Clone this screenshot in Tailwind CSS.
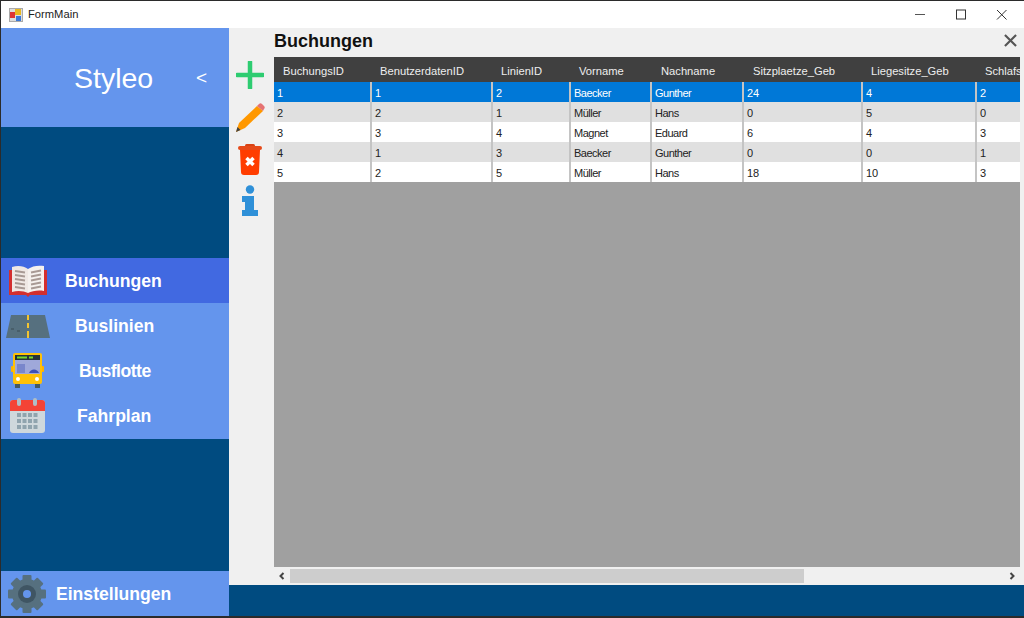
<!DOCTYPE html>
<html><head><meta charset="utf-8"><script src="https://cdn.jsdelivr.net/npm/@tailwindcss/browser@4"></script></head>
<body class="m-0 overflow-hidden">
<div class="w-[1024px] h-[618px] flex flex-col bg-white border-t border-l border-b-2 border-[#2b2b2b] font-['Liberation_Sans',sans-serif] overflow-hidden">
  <!-- title bar -->
  <div class="h-[27px] flex items-center bg-white shrink-0">
    <svg class="ml-[8px] w-[14px] h-[14px]" viewBox="0 0 14 14"><rect x="0.5" y="0.5" width="13" height="13" fill="#ddd" stroke="#aaa"/><rect x="1" y="4" width="5" height="6" fill="#d33"/><rect x="6" y="1" width="6" height="6" fill="#e8b820"/><rect x="7" y="8" width="5" height="5" fill="#3a78d8"/></svg>
    <span class="ml-[5px] text-[11.2px] text-[#222]">FormMain</span>
    <div class="ml-auto flex items-center text-[#333]">
      <svg class="w-[46px] h-[27px]" viewBox="0 0 46 27"><path d="M17 13.500h10" stroke="#555" stroke-width="1"/></svg>
      <svg class="w-[46px] h-[27px] -ml-[5px]" viewBox="0 0 46 27"><rect x="17.500" y="9" width="9" height="9" fill="none" stroke="#333"/></svg>
      <svg class="w-[46px] h-[27px] -ml-[5px] mr-[-2px]" viewBox="0 0 46 27"><path d="M17 9l9.500 9.500M26.500 9L17 18.500" stroke="#333" fill="none"/></svg>
    </div>
  </div>
  <div class="flex-1 flex min-h-0">
    <!-- sidebar -->
    <div class="w-[228px] shrink-0 flex flex-col bg-[#004b80]">
      <div class="h-[99px] bg-[#6495ed] flex items-center text-white shrink-0">
        <span class="ml-[73px] w-[122px] text-[28.500px] mt-[1px] leading-none">Styleo</span>
        <span class="text-[19px] leading-none">&lt;</span>
      </div>
      <div class="h-[131px] shrink-0"></div>
      <div class="h-[45px] bg-[#4169e1] flex items-center shrink-0 text-white font-bold text-[17.600px]">
        <svg class="ml-[7px] w-[40px] h-[32px] shrink-0" viewBox="0 0 40 32"><path d="M1 5h38v25H22l-2 2-2-2H1z" fill="#d32f2f"/><path d="M4 2c6-2 12-1 16 2v24c-4-2-10-3-16-1z" fill="#efe8e4"/><path d="M36 1c-6-1-12 0-16 3v24c4-2 10-3 16-2z" fill="#f5f1ee"/><path d="M7 6l10 1.500M7 10l10 1.500M7 14l10 1.500M7 18l10 1.500M7 22l10 1.500M23 7.500l10-2M23 11.500l10-2M23 15.500l10-2M23 19.500l10-2M23 23.500l10-2" stroke="#a89a94" stroke-width="2"/></svg>
        <span class="ml-[17px] mt-[2px]">Buchungen</span>
      </div>
      <div class="h-[45px] bg-[#6495ed] flex items-center shrink-0 text-white font-bold text-[17.600px]">
        <svg class="ml-[5px] w-[44px] h-[24px] shrink-0 mt-[1px]" viewBox="0 0 44 24"><path d="M5 1h34l5 23H0z" fill="#56707f"/><path d="M22 1v5M22 9v5M22 17v7" stroke="#f4c430" stroke-width="2"/><path d="M5 15h3M11 17h3" stroke="#3a4c57" stroke-width="1"/></svg>
        <span class="ml-[25px] mt-[2px]">Buslinien</span>
      </div>
      <div class="h-[45px] bg-[#6495ed] flex items-center shrink-0 text-white font-bold text-[17.600px]">
        <svg class="ml-[10px] w-[33px] h-[36px] shrink-0 mt-[1px]" viewBox="0 0 33 36"><rect x="4" y="31" width="5" height="4" fill="#455a64"/><rect x="24" y="31" width="5" height="4" fill="#455a64"/><rect x="0" y="13" width="3" height="6" rx="1" fill="#ffb300"/><rect x="30" y="13" width="3" height="6" rx="1" fill="#ffb300"/><rect x="2" y="0" width="29" height="31" rx="2" fill="#ffc107"/><rect x="4" y="2" width="25" height="5" fill="#263238"/><path d="M6 4.500h10M18 4.500h4" stroke="#76d82a" stroke-width="2"/><rect x="4" y="7" width="25" height="14" fill="#9fa8da"/><rect x="6" y="11" width="8" height="9" fill="#7986cb"/><path d="M18 20a5.500 6 0 0 1 10 0z" fill="#3f51b5"/><circle cx="7" cy="26" r="2" fill="#fff"/><circle cx="26" cy="26" r="2" fill="#fff"/></svg>
        <span class="ml-[35px] mt-[2px] tracking-[-0.5px]">Busflotte</span>
      </div>
      <div class="h-[46px] bg-[#6495ed] flex items-center shrink-0 text-white font-bold text-[17.600px]">
        <svg class="ml-[9px] w-[35px] h-[35px] shrink-0 mb-[2px]" viewBox="0 0 35 35"><rect y="2" width="35" height="33" rx="3" fill="#cfd8dc"/><path d="M0 13V5a3 3 0 0 1 3-3h29a3 3 0 0 1 3 3v8z" fill="#f44336"/><rect x="7" y="0" width="4" height="8" rx="2" fill="#b0bec5"/><rect x="23" y="0" width="4" height="8" rx="2" fill="#b0bec5"/><g fill="#90a4ae"><rect x="7" y="15" width="4" height="4"/><rect x="12.500" y="15" width="4" height="4"/><rect x="18" y="15" width="4" height="4"/><rect x="23.500" y="15" width="4" height="4"/><rect x="7" y="21" width="4" height="4"/><rect x="12.500" y="21" width="4" height="4"/><rect x="18" y="21" width="4" height="4"/><rect x="23.500" y="21" width="4" height="4"/><rect x="7" y="27" width="4" height="4"/><rect x="12.500" y="27" width="4" height="4"/><rect x="18" y="27" width="4" height="4"/><rect x="23.500" y="27" width="4" height="4"/></g></svg>
        <span class="ml-[32px] mt-[1px]">Fahrplan</span>
      </div>
      <div class="flex-1"></div>
      <div class="h-[45px] bg-[#6495ed] flex items-center shrink-0 text-white font-bold text-[17.600px]">
        <svg class="ml-[7px] w-[38px] h-[40px] shrink-0" viewBox="0 0 38 40"><g fill="#56707f"><circle cx="19" cy="20" r="15"/><rect x="14.500" y="1" width="9" height="38" rx="1"/><rect x="14.500" y="1" width="9" height="38" rx="1" transform="rotate(45 19 20)"/><rect x="14.500" y="1" width="9" height="38" rx="1" transform="rotate(90 19 20)"/><rect x="14.500" y="1" width="9" height="38" rx="1" transform="rotate(135 19 20)"/></g><circle cx="19" cy="20" r="9" fill="#3f5563"/><circle cx="19" cy="20" r="4" fill="#6495ed"/></svg>
        <span class="ml-[10px] mt-[2px]">Einstellungen</span>
      </div>
    </div>
    <!-- right -->
    <div class="flex-1 flex flex-col min-w-0">
      <div class="flex-1 bg-[#f0f0f0] flex min-h-0">
        <div class="w-[45px] shrink-0 flex flex-col items-center pt-[33px] pr-[3px]">
          <svg class="w-[28px] h-[28px]" viewBox="0 0 28 28"><path d="M14 1v26M1 14h26" stroke="#2ecc71" stroke-width="4.500" stroke-linecap="round"/></svg>
          <svg class="w-[30px] h-[30px] mt-[14px]" viewBox="0 0 30 30"><path d="M1 29l3-9L22 3l6 5-18 17z" fill="#ff9800"/><path d="M22 3l2-2c1-1 2-1 3 0l2 2c1 1 1 2 0 3l-1 2z" fill="#e57373"/><path d="M1 29l1.500-5 3 3z" fill="#424242"/></svg>
          <svg class="w-[24px] h-[31px] mt-[11px]" viewBox="0 0 24 31"><rect x="7" y="0" width="10" height="4" rx="1.500" fill="#d84315"/><rect x="0" y="2" width="24" height="4" rx="2" fill="#e64a19"/><path d="M2 6h20l-1 22a3 3 0 0 1-3 3H6a3 3 0 0 1-3-3z" fill="#ff3d00"/><path d="M8.500 14l7 7M15.500 14l-7 7" stroke="#fff" stroke-width="3.500"/></svg>
          <svg class="w-[18px] h-[31px] mt-[10px]" viewBox="0 0 18 31"><circle cx="9" cy="4.500" r="4.200" fill="#2f90d8"/><path d="M1 11h12v14h4v6H1v-6h3v-8H1z" fill="#2f90d8"/></svg>
        </div>
        <div class="flex-1 flex flex-col min-w-0 relative">
          <div class="h-[29px] shrink-0 flex items-center">
            <span class="font-bold text-[18px] text-[#111] mt-[-3px]">Buchungen</span>
            <svg class="absolute right-[7px] top-[6px] w-[13px] h-[13px]" viewBox="0 0 14 14"><path d="M1 1l12 12M13 1L1 13" stroke="#555" stroke-width="2.300"/></svg>
          </div>
          <div class="flex-1 w-[746px] bg-[#a0a0a0] overflow-hidden min-h-0">
            <div class="w-[790px] text-[11px]">
              <div class="h-[25px] bg-[#404040] text-[#eee] grid grid-cols-[98px_121px_78px_81px_92px_119px_114px_87px] items-center text-left [&>span]:pl-[8px] [&>span]:pt-[3px] text-[11.200px]">
                <span class="ml-[1px]">BuchungsID</span><span>BenutzerdatenID</span><span>LinienID</span><span>Vorname</span><span class="ml-[1px]">Nachname</span><span class="ml-[1px]">Sitzplaetze_Geb</span><span>Liegesitze_Geb</span><span>Schlafsitze_Geb</span>
              </div>
              <div class="h-[20px] bg-[#0078d7] text-white grid grid-cols-[98px_121px_78px_81px_92px_119px_114px_87px] items-start [&>span]:h-[20px] [&>span]:border-r-2 [&>span]:border-[#c4c4c4] [&>span]:pl-[3px] [&>span]:pt-[1px] [&>span]:leading-[20px]">
                <span>1</span><span>1</span><span>2</span><span class="tracking-[-0.5px]">Baecker</span><span class="tracking-[-0.5px]">Gunther</span><span>24</span><span>4</span><span>2</span>
              </div>
              <div class="h-[20px] bg-[#e0e0e0] text-[#222] grid grid-cols-[98px_121px_78px_81px_92px_119px_114px_87px] items-start [&>span]:h-[20px] [&>span]:border-r-2 [&>span]:border-[#c4c4c4] [&>span]:pl-[3px] [&>span]:pt-[1px] [&>span]:leading-[20px]">
                <span>2</span><span>2</span><span>1</span><span class="tracking-[-0.5px]">Müller</span><span class="tracking-[-0.5px]">Hans</span><span>0</span><span>5</span><span>0</span>
              </div>
              <div class="h-[20px] bg-white text-[#222] grid grid-cols-[98px_121px_78px_81px_92px_119px_114px_87px] items-start [&>span]:h-[20px] [&>span]:border-r-2 [&>span]:border-[#c4c4c4] [&>span]:pl-[3px] [&>span]:pt-[1px] [&>span]:leading-[20px]">
                <span>3</span><span>3</span><span>4</span><span class="tracking-[-0.5px]">Magnet</span><span class="tracking-[-0.5px]">Eduard</span><span>6</span><span>4</span><span>3</span>
              </div>
              <div class="h-[20px] bg-[#e0e0e0] text-[#222] grid grid-cols-[98px_121px_78px_81px_92px_119px_114px_87px] items-start [&>span]:h-[20px] [&>span]:border-r-2 [&>span]:border-[#c4c4c4] [&>span]:pl-[3px] [&>span]:pt-[1px] [&>span]:leading-[20px]">
                <span>4</span><span>1</span><span>3</span><span class="tracking-[-0.5px]">Baecker</span><span class="tracking-[-0.5px]">Gunther</span><span>0</span><span>0</span><span>1</span>
              </div>
              <div class="h-[20px] bg-white text-[#222] grid grid-cols-[98px_121px_78px_81px_92px_119px_114px_87px] items-start [&>span]:h-[20px] [&>span]:border-r-2 [&>span]:border-[#c4c4c4] [&>span]:pl-[3px] [&>span]:pt-[1px] [&>span]:leading-[20px]">
                <span>5</span><span>2</span><span>5</span><span class="tracking-[-0.5px]">Müller</span><span class="tracking-[-0.5px]">Hans</span><span>18</span><span>10</span><span>3</span>
              </div>
            </div>
          </div>
          <div class="h-[18px] shrink-0 w-[746px] flex items-center">
            <svg class="w-[16px] h-[10px] shrink-0" viewBox="0 0 16 10"><path d="M9.500 2L6.500 5l3 3" stroke="#444" stroke-width="2" fill="none"/></svg>
            <div class="w-[514px] h-[14px] bg-[#cdcdcd]"></div>
            <svg class="ml-auto w-[16px] h-[10px] shrink-0" viewBox="0 0 16 10"><path d="M6.500 2l3 3-3 3" stroke="#444" stroke-width="2" fill="none"/></svg>
          </div>
        </div>
      </div>
      <div class="h-[31px] shrink-0 bg-[#004b80]"></div>
    </div>
  </div>
</div>
</body></html>
